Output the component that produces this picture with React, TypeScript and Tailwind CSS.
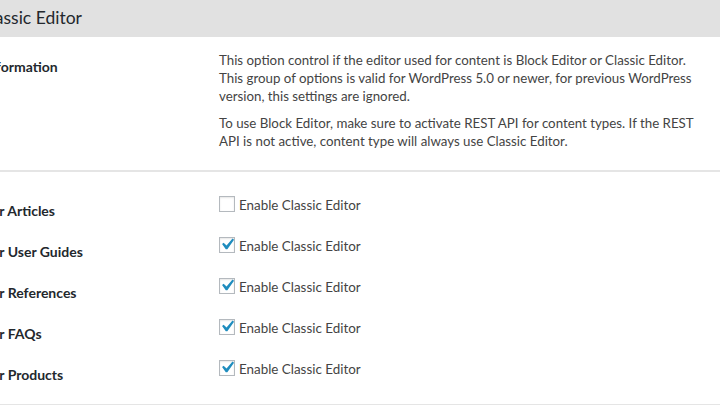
import React from 'react';

const ROWS = [
  { label: 'For Articles', checked: false },
  { label: 'For User Guides', checked: true },
  { label: 'For References', checked: true },
  { label: 'For FAQs', checked: true },
  { label: 'For Products', checked: true },
];

const Check: React.FC<{ checked: boolean }> = ({ checked }) => (
  <span className="relative w-[16px] h-[16px] shrink-0 border border-[#b4b9be] bg-white shadow-[inset_0_1px_2px_rgba(0,0,0,0.1)]">
    {checked && (
      <svg className="absolute left-[0px] -top-[1px] w-[15px] h-[15px]" viewBox="4 3.5 13 13" fill="#1e8cbe">
        <path d="M14.83 4.89l1.34.94-5.81 8.38H9.02L5.78 9.67l1.34-1.25 2.57 2.4z" />
      </svg>
    )}
  </span>
);

export default function App() {
  return (
    <div className="w-[720px] h-[405px] overflow-hidden bg-white text-[#23282d]" style={{ fontFamily: 'Lato, "Noto Sans", sans-serif' }}>
      <div className="-ml-[16px]">
        <div className="h-[37px] bg-[#e1e1e1] flex items-center -ml-[5px]">
          <h2 className="text-[17.5px] font-normal text-[#23282d]">Classic Editor</h2>
        </div>
        <div className="flex pt-[14px] pb-[20px] border-b-2 border-[#e5e5e5]">
          <div className="w-[235px] shrink-0 pt-[5px] text-[14px] font-bold">Information</div>
          <div className="text-[13.3px] leading-[18px] text-[#444]">
            <p>This option control if the editor used for content is Block Editor or Classic Editor.<br />This group of options is valid for WordPress 5.0 or newer, for previous WordPress<br />version, this settings are ignored.</p>
            <p className="mt-[9px]">To use Block Editor, make sure to activate REST API for content types. If the REST<br />API is not active, content type will always use Classic Editor.</p>
          </div>
        </div>
        <div className="pt-[24px] pb-[3px] border-b-2 border-[#e5e5e5]">
          {ROWS.map((r) => (
            <div key={r.label} className="flex h-[41px]">
              <div className="w-[235px] shrink-0 pt-[4px] text-[14px] font-bold">{r.label}</div>
              <label className="flex items-start gap-[4px] text-[13.4px] text-[#444]">
                <Check checked={r.checked} />
                <span className="-mt-[1px]">Enable Classic Editor</span>
              </label>
            </div>
          ))}
        </div>
      </div>
    </div>
  );
}
